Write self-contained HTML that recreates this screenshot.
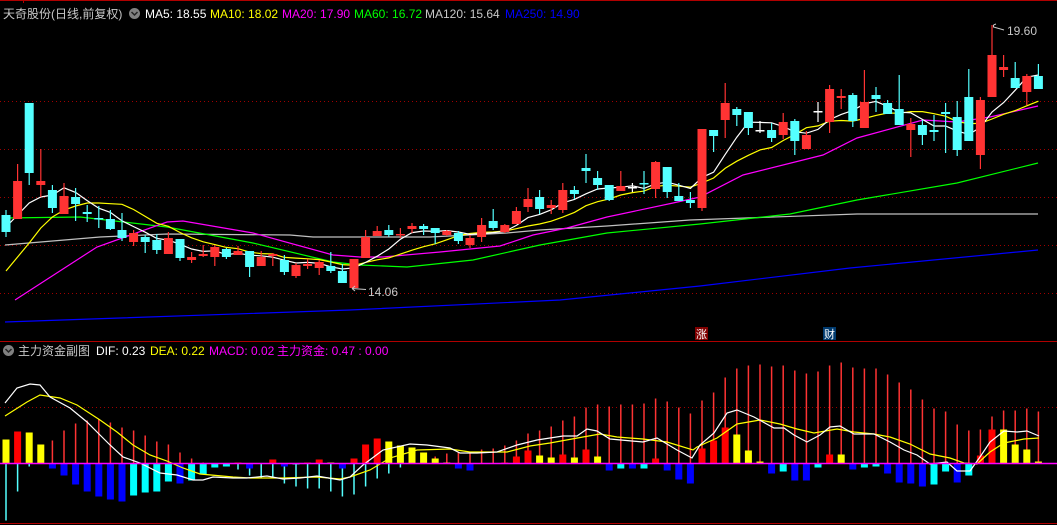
<!DOCTYPE html>
<html><head><meta charset="utf-8">
<style>
html,body{margin:0;padding:0;background:#000;width:1057px;height:525px;overflow:hidden}
svg{display:block}
text{font-family:"Liberation Sans","Noto Sans CJK SC",sans-serif;font-size:12px}
</style></head>
<body>
<svg id="s" width="1057" height="525" xmlns="http://www.w3.org/2000/svg">
<rect width="1057" height="525" fill="#000"/>
<line x1="0" y1="0.5" x2="1057" y2="0.5" stroke="#b00000"/>
<line x1="23.5" y1="0" x2="23.5" y2="3" stroke="#b00000"/>
<g stroke="#a00000" stroke-dasharray="1 3" stroke-width="1">
<line x1="0" y1="101.5" x2="1057" y2="101.5"/><line x1="0" y1="149.5" x2="1057" y2="149.5"/>
<line x1="0" y1="197.5" x2="1057" y2="197.5"/><line x1="0" y1="245.5" x2="1057" y2="245.5"/>
<line x1="0" y1="293.5" x2="1057" y2="293.5"/><line x1="0" y1="407.5" x2="1057" y2="407.5"/>
</g>
<line x1="0" y1="341.5" x2="1057" y2="341.5" stroke="#b00000"/>
<line x1="0" y1="523.5" x2="1057" y2="523.5" stroke="#b00000"/>
<g id="g"></g>
<!-- header -->
<text x="3" y="18" fill="#c8c8c8">天奇股份(日线,前复权)</text>
<circle cx="134.5" cy="13.5" r="5.5" fill="#808080"/>
<path d="M131.5 12 L134.5 15 L137.5 12" stroke="#222" stroke-width="1.5" fill="none"/>
<text x="145" y="18" fill="#ffffff">MA5: 18.55</text>
<text x="210" y="18" fill="#ffff00">MA10: 18.02</text>
<text x="282" y="18" fill="#ff00ff">MA20: 17.90</text>
<text x="354" y="18" fill="#00ff00">MA60: 16.72</text>
<text x="425" y="18" fill="#c8c8c8">MA120: 15.64</text>
<text x="505" y="18" fill="#0000ff">MA250: 14.90</text>
<circle cx="8.5" cy="350.5" r="5.5" fill="#808080"/>
<path d="M5.5 349 L8.5 352 L11.5 349" stroke="#222" stroke-width="1.5" fill="none"/>
<text x="18" y="355" fill="#c8c8c8">主力资金副图</text>
<text x="96" y="355" fill="#ffffff">DIF: 0.23</text>
<text x="150" y="355" fill="#ffff00">DEA: 0.22</text>
<text x="209" y="355" fill="#ff00ff">MACD: 0.02</text>
<text x="277" y="355" fill="#ff00ff">主力资金: 0.47 : 0.00</text>
<!-- markers -->
<rect x="695" y="327" width="13" height="13" fill="#800000"/>
<text x="696" y="338" fill="#fff" style="font-size:11px">涨</text>
<rect x="823" y="327" width="13" height="13" fill="#003a6e"/>
<text x="824" y="338" fill="#fff" style="font-size:11px">财</text>
<!-- labels -->
<path d="M352 288.5 L366 289.5 M352 288.5 L355 286 M352 288.5 L355 291" stroke="#c8c8c8" fill="none"/>
<text x="368" y="296" fill="#c8c8c8">14.06</text>
<path d="M993.5 25 L993.5 27 L1004 30 M993.5 25 L996 24" stroke="#c8c8c8" fill="none"/>
<text x="1007" y="35" fill="#c8c8c8">19.60</text>
</svg>
<script>
var C=[
['c',215,232,210,237],['r',181,219,164,219],['c',103,173,103,185],['r',181,185,149,197],['c',190,208,185,213],
['r',196,214,183,214],['c',197,204,188,221],['c',212,214,205,222],['c',218,219,206,228],['c',219,229,210,230],
['c',230,238,213,241],['r',233,242,230,246],['c',237,242,235,253],['c',240,250,234,254],['r',238,254,232,254],
['c',239,258,239,261],['r',257,260,252,263],['r',254,256,245,257],['r',247,257,245,266],['c',249,257,248,259],
['r',251,255,246,255],['c',251,267,251,277],['r',257,266,251,266],['r',254,256,253,266],['c',260,272,255,275],
['r',265,276,263,278],['r',264,266,259,269],['r',262,268,260,275],['c',266,271,252,273],['c',271,283,264,283],
['r',259,288,259,288],['r',237,258,230,258],['r',231,236,226,236],['c',230,235,225,237],['r',234,235,228,238],
['r',226,229,223,233],['c',226,229,224,235],['c',228,233,228,244],['r',231,235,230,236],['c',233,241,231,244],
['r',238,245,235,248],['r',225,237,218,242],['c',221,228,209,230],['r',225,232,224,233],['r',211,224,207,224],
['r',199,207,188,212],['c',197,209,190,214],['r',205,208,200,214],['r',190,210,183,213],['c',190,194,186,199],
['c',168,171,154,183],['c',178,185,171,190],['c',185,200,185,201],['r',186,191,171,191],['w',187,188,183,192],
['c',183,184,171,194],['r',162,189,161,198],['c',167,192,167,198],['c',196,201,183,201],['c',200,203,192,208],
['r',129,208,129,211],['c',130,136,130,152],['r',103,120,83,138],['c',109,115,107,126],['c',112,128,112,135],
['w',130,131,121,133],['c',130,138,123,142],['r',122,135,113,139],['c',121,141,119,155],['r',135,149,131,149],
['w',111,112,102,122],['r',89,122,85,133],['r',96,98,89,109],['c',95,121,93,127],['r',102,128,70,128],
['c',95,99,87,112],['c',103,114,100,114],['c',109,125,75,125],['r',124,130,118,157],['c',125,135,120,145],
['c',130,132,115,141],['c',112,114,103,153],['c',117,150,101,156],['c',97,141,69,141],['r',100,155,97,169],
['r',55,97,25,97],['r',67,70,55,77],['c',78,88,62,88],['r',76,92,74,105],['c',76,89,64,89]];
var B=[
['Y',24,-57],['R',32,-28],['Y',31,-3],['Y',19,14],['B',-5,23],['B',-12,33],['B',-21,40],['B',-28,43],['B',-33,44],['B',-36,41],
['B',-38,36],['C',-32,33],['C',-29,28],['C',-28,22],['C',-18,19],['B',-20,11],['C',-17,5],['C',-11,1],['C',-4,0],['C',-3,0],
['R',1,-6],['B',-5,-12],['-',0,-14],['R',4,-15],['B',-3,-20],['C',-1,-23],['R',1,-25],['R',4,-25],['Y',1,-28],['B',-5,-33],
['R',5,-31],['R',19,-23],['R',25,-15],['Y',22,-10],['Y',18,-4],['Y',16,0],['Y',11,5],['Y',5,7],['Y',1,10],['B',-5,11],
['B',-7,10],['-',0,14],['-',0,15],['R',1,18],['R',7,23],['R',13,30],['Y',8,33],['Y',6,37],['R',9,43],['Y',6,47],
['R',14,56],['Y',7,59],['B',-7,57],['C',-5,59],['B',-5,59],['C',-5,60],['R',5,65],['B',-7,62],['B',-16,56],['B',-20,50],
['R',15,63],['R',23,71],['R',36,86],['Y',29,95],['Y',13,98],['Y',2,99],['B',-10,97],['C',-8,98],['B',-17,93],['B',-17,90],
['C',-4,92],['R',9,98],['Y',9,101],['B',-6,96],['C',-4,95],['C',-3,95],['B',-10,89],['B',-19,81],['B',-20,74],['B',-23,64],
['C',-21,55],['C',-8,52],['B',-19,39],['C',-12,33],['R',8,34],['R',34,47],['Y',34,53],['Y',19,53],['Y',14,55],['Y',2,52]];
function X(i){return 6+11.6*i;}
var o='';
function pl(pts,col,w){o+='<polyline fill="none" stroke="'+col+'" stroke-width="'+(w||1)+'" points="'+pts.map(function(p){return p[0]+','+p[1]}).join(' ')+'"/>';}
// long MAs
pl([[5,322],[120,318],[350,310],[560,300],[700,286],[850,268],[1038,250]],'#0000ff',1.2);
pl([[5,245],[100,237],[167,234],[290,235],[313,237],[360,237],[430,237],[507,233],[540,230],[607,226],[690,220],[857,214],[1038,214]],'#c0c0c0',1.2);
pl([[5,218],[80,217],[167,227],[253,243],[333,262],[360,265],[407,267],[473,260],[540,245],[607,233],[700,224],[790,214],[857,200],[957,183],[1038,163]],'#00ff00',1.2);
pl([[15,300],[97,247],[167,222],[183,221],[253,233],[333,255],[360,257],[383,257],[440,252],[500,246],[533,235],[567,228],[607,217],[673,203],[700,197],[743,175],[823,155],[857,138],[923,120],[957,122],[990,117],[1038,106]],'#ff00ff',1.2);
// MA5/MA10
var cl=C.map(function(c){return c[0]=='c'?c[2]:c[1];});
var m5=[],m10=[];var e5=[227,215,203,197],e10=[271,257,243,228,217,210,206,203,203];
for(var i=0;i<cl.length;i++){
 if(i<4)m5.push([X(i),e5[i]]);else{var s=0;for(var k=i-4;k<=i;k++)s+=cl[k];m5.push([X(i),(s/5).toFixed(1)]);}
 if(i<9)m10.push([X(i),e10[i]]);else{var s2=0;for(var k=i-9;k<=i;k++)s2+=cl[k];m10.push([X(i),(s2/10).toFixed(1)]);}
}
pl(m10,'#ffff00',1.2);pl(m5,'#ffffff',1.2);
// candles
C.forEach(function(c,i){var x=X(i);var col=c[0]=='r'?'#ff3333':(c[0]=='c'?'#54ffff':'#ffffff');
 o+='<line x1="'+x+'" y1="'+c[3]+'" x2="'+x+'" y2="'+c[4]+'" stroke="'+col+'" stroke-width="1.2"/>';
 var h=Math.max(c[2]-c[1],1.5);o+='<rect x="'+(x-4.5)+'" y="'+c[1]+'" width="9" height="'+h+'" fill="'+col+'"/>';});
// sub panel
var Z=463.5;var BC={R:'#ff0000',Y:'#ffff00',B:'#0000ff',C:'#00ffff'};
B.forEach(function(b,i){var x=X(i);
 if(b[2]){var col=b[2]>0?'#ff3333':'#54ffff';o+='<line x1="'+x+'" y1="'+Z+'" x2="'+x+'" y2="'+(Z-b[2])+'" stroke="'+col+'" stroke-width="1.5"/>';}
 if(b[1]&&b[0]!='-'){var y=b[1]>0?Z-b[1]:Z;o+='<rect x="'+(x-3.5)+'" y="'+y+'" width="7" height="'+Math.abs(b[1])+'" fill="'+BC[b[0]]+'"/>';}
});
pl([[5,416],[27,402],[40,395],[60,398],[77,405],[100,420],[117,432],[133,445],[150,455],[167,461],[183,468],[200,474],[233,477],[250,478],[283,478],[317,477],[340,479],[350,477],[370,470],[390,458],[417,450],[450,449],[470,452],[507,452],[530,446],[550,443],[583,437],[600,434],[617,437],[643,439],[667,442],[693,450],[697,447],[717,438],[737,424],[760,420],[780,424],[797,429],[814,433],[837,429],[854,432],[874,434],[890,437],[910,444],[930,454],[950,458],[964,463],[977,464],[990,452],[1004,443],[1024,439],[1039,438]],'#ffff00',1.2);
pl([[5,403],[17,388],[30,384],[40,385],[50,397],[70,408],[87,422],[100,435],[110,445],[123,457],[140,463],[160,473],[177,475],[193,480],[203,480],[213,477],[233,478],[247,478],[267,476],[283,479],[300,478],[317,476],[340,480],[350,477],[363,465],[383,450],[410,444],[427,445],[450,448],[460,453],[477,453],[497,452],[517,445],[537,440],[563,436],[577,436],[587,429],[597,431],[610,439],[643,442],[657,438],[677,450],[692,458],[700,445],[714,433],[727,413],[737,410],[754,417],[774,428],[784,428],[794,435],[807,442],[820,435],[830,427],[840,426],[854,434],[874,434],[890,442],[904,450],[917,455],[930,464],[947,462],[957,471],[970,471],[980,457],[990,442],[1004,431],[1017,432],[1027,431],[1039,436]],'#ffffff',1.2);
o+='<line x1="0" y1="'+Z+'" x2="1057" y2="'+Z+'" stroke="#ff00ff" stroke-width="1.5"/>';
document.getElementById('g').innerHTML=o;
</script>
</body></html>
